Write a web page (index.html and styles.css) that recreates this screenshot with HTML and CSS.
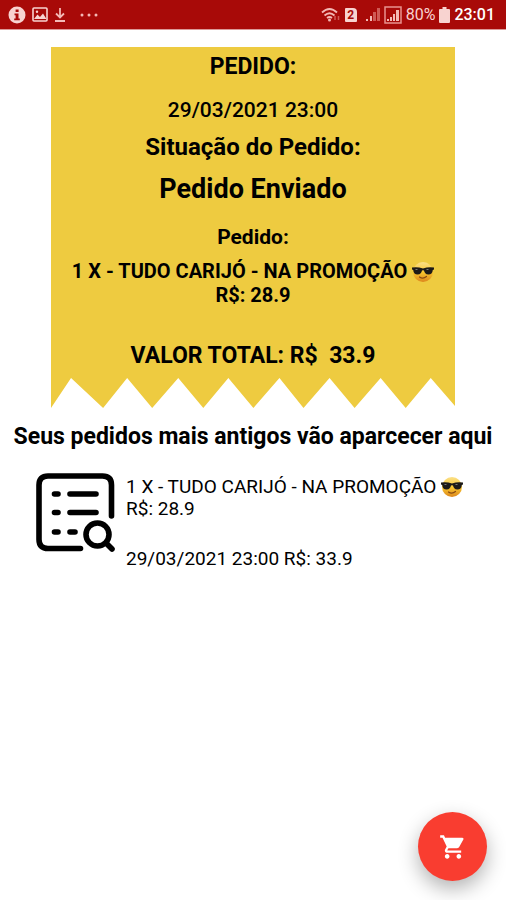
FILE: index.html
```html
<!DOCTYPE html>
<html lang="pt-BR">
<head>
  <meta charset="UTF-8">
  <meta name="viewport" content="width=device-width, initial-scale=1.0">
  <title>Pedidos</title>
  <link rel="stylesheet" href="styles.css">
</head>
<body>
  <!-- Sunglasses face, used in the ticket and in the history -->
  <svg class="sprite" aria-hidden="true">
    <defs>
      <linearGradient id="face" x1="0" y1="0" x2="0" y2="1">
        <stop offset="0" stop-color="#fbe08a"/>
        <stop offset="0.5" stop-color="#f9c72f"/>
        <stop offset="1" stop-color="#dc861c"/>
      </linearGradient>
    </defs>
    <symbol id="cool" viewBox="0 0 22 22">
      <circle cx="11" cy="11" r="10" fill="url(#face)"/>
      <path d="M0 6.5Q5.500 5.500 11 7.500Q16.500 5.500 22 6.500V8.500L20.800 9C20.500 12 19 13.500 16.500 13.500C13.500 13.500 12.500 11.500 12 9.500Q11 8.800 10 9.500C9.500 11.500 8.500 13.500 5.500 13.500C3 13.500 1.500 12 1.200 9L0 8.500Z" fill="#1c1a18"/>
      <path d="M3.500 8.500h2M14.500 8.500h2" stroke="#777" stroke-width="1"/>
      <path d="M7.500 16Q11 18.500 14.500 15.500" fill="none" stroke="#8a4b12" stroke-width="1.200" stroke-linecap="round"/>
    </symbol>
  </svg>

  <header class="status-bar">
    <div class="status-left">
      <svg width="18" height="18" viewBox="0 0 18 18">
        <circle cx="9" cy="9" r="8.500" fill="#f8d3d0"/>
        <path d="M7.600 3.500h3v2.600h-3zM6.500 7.500h4v5h1.300v1.700H6.200v-1.700h1.400V9.200H6.500z" fill="#a80a08"/>
      </svg>
      <svg width="16" height="16" viewBox="0 0 16 16">
        <rect x="1" y="1" width="14" height="13" rx="1" fill="none" stroke="#f8d3d0" stroke-width="1.600"/>
        <path d="M2 12l3.500-4.500 2.500 2.500 3-3.500 3.500 5.500z" fill="#f8d3d0"/>
        <circle cx="5" cy="4.800" r="1.200" fill="#f8d3d0"/>
      </svg>
      <svg width="12" height="16" viewBox="0 0 12 16">
        <path d="M6 1v9M2 6.500l4 4 4-4M1 14h10" fill="none" stroke="#f3b9b5" stroke-width="1.800"/>
      </svg>
      <svg class="more" width="18" height="4" viewBox="0 0 18 4">
        <g fill="#f3b9b5"><circle cx="2" cy="2" r="1.500"/><circle cx="9" cy="2" r="1.500"/><circle cx="16" cy="2" r="1.500"/></g>
      </svg>
    </div>
    <div class="status-right">
      <svg width="20" height="16" viewBox="0 0 20 16">
        <path d="M1 5.500Q8.500-1.500 16 5.500M3.500 8.500Q8.500 4 13.500 8.500M6 11Q8.500 9 11 11" fill="none" stroke="#f3b9b5" stroke-width="1.800"/>
        <circle cx="8.500" cy="13" r="1.500" fill="#f3b9b5"/>
        <path d="M14 13V9M17.500 9v4" stroke="#cf5a55" stroke-width="1.500"/>
      </svg>
      <span class="sim">2</span>
      <svg class="signal" width="15" height="15" viewBox="0 0 15 15">
        <path d="M1 12h2v2H1zM5 9h2v5H5z" fill="#f3b9b5"/>
        <path d="M8 5h3v9H8zM12 1h3v13h-3z" fill="#cf5a55"/>
      </svg>
      <svg width="18" height="18" viewBox="0 0 18 18">
        <rect x="1" y="1" width="16" height="16" fill="none" stroke="#e8938e" stroke-width="1.500"/>
        <path d="M3 13h2v2H3zM6 11h2v4H6zM9 8h2v7H9zM12 4h3v11h-3z" fill="#f3b9b5"/>
      </svg>
      <span class="battery-level">80%</span>
      <svg width="11" height="16" viewBox="0 0 11 16">
        <path d="M3.500 0h4v2H10q1 0 1 1v12q0 1-1 1H1q-1 0-1-1V3q0-1 1-1h2.500z" fill="#f8d3d0"/>
      </svg>
      <span class="clock">23:01</span>
    </div>
  </header>

  <main>
    <section class="ticket">
      <div class="ticket-body">
        <h1 class="ticket-title">PEDIDO:</h1>
        <p class="ticket-date">29/03/2021 23:00</p>
        <p class="ticket-label">Situação do Pedido:</p>
        <p class="ticket-status">Pedido Enviado</p>
        <p class="ticket-subtitle">Pedido:</p>
        <p class="ticket-items">1 X - TUDO CARIJÓ - NA PROMOÇÃO <svg class="emoji" role="img" aria-label="😎"><use href="#cool"/></svg><br>R$: 28.9</p>
        <p class="ticket-total">VALOR TOTAL: R$&nbsp; 33.9</p>
      </div>
      <svg class="ticket-edge" viewBox="0 0 404 31" preserveAspectRatio="none" aria-hidden="true">
        <path d="M0 0H404V30L379 1L354 31L329 1L303 31L278 1L252 31L228 1L202 31L177 1L152 31L127 1L101 31L76 1L52 31L20 1L0 31Z"/>
      </svg>
    </section>

    <h2 class="history-title">Seus pedidos mais antigos vão aparcecer aqui</h2>

    <article class="order">
      <svg class="order-icon" viewBox="0 0 80 80" fill="none" stroke="#000" stroke-linecap="round" aria-hidden="true">
        <path d="M44.500 75.500H12Q3 75.500 3 66.500V12Q3 3 12 3H66.500Q75.500 3 75.500 12V43" stroke-width="5.600"/>
        <path d="M18.500 21h3.500M34 21h26M18.500 39.500h3.500M34 39.500h26M18.500 59h3.500M34 59h5" stroke-width="5.600"/>
        <circle cx="61.500" cy="61.500" r="11.500" stroke-width="5.600"/>
        <path d="M70 70l6 6" stroke-width="5.600"/>
      </svg>
      <div class="order-info">
        <p>1 X - TUDO CARIJÓ - NA PROMOÇÃO <svg class="emoji" role="img" aria-label="😎"><use href="#cool"/></svg><br>R$: 28.9</p>
        <p>29/03/2021 23:00 R$: 33.9</p>
      </div>
    </article>
  </main>

  <button class="cart-button" type="button" aria-label="Carrinho">
    <svg width="28" height="28" viewBox="0 0 24 24" fill="#fff">
      <path d="M7 18c-1.100 0-1.990.9-1.990 2S5.900 22 7 22s2-.9 2-2-.9-2-2-2zM1 2v2h2l3.600 7.590-1.350 2.450c-.16.280-.25.610-.25.960 0 1.100.9 2 2 2h12v-2H7.420c-.14 0-.25-.11-.25-.25l.03-.12.9-1.630h7.450c.75 0 1.410-.41 1.750-1.030l3.580-6.490A1 1 0 0 0 20 4H5.210l-.94-2H1zm16 16c-1.100 0-1.990.9-1.990 2s.89 2 1.990 2 2-.9 2-2-.9-2-2-2z"/>
    </svg>
  </button>
</body>
</html>
```
FILE: styles.css
```css
body {
  margin: 0;
  font-family: Roboto, "Liberation Sans", sans-serif;
  background: #fff;
  color: #000;
}
h1, h2, p {
  margin: 0;
}
.sprite {
  position: absolute;
  width: 0;
  height: 0;
}

/* Phone status bar */
.status-bar {
  display: flex;
  justify-content: space-between;
  align-items: center;
  height: 29px;
  padding: 0 11px 0 8px;
  border-bottom: 1px solid #dc9a98;
  background: #a80a08;
  color: #f8d3d0;
}
.status-left, .status-right {
  display: flex;
  align-items: center;
}
.status-left {
  gap: 6px;
}
.status-left .more {
  margin-left: 8px;
}
.status-right {
  gap: 4px;
}
.status-right .signal {
  margin-left: 4px;
}
.sim {
  width: 12px;
  border-radius: 1px 4px 1px 1px;
  background: #f8d3d0;
  color: #a80a08;
  font-size: 12px;
  font-weight: bold;
  line-height: 14px;
  text-align: center;
}
.battery-level, .clock {
  font-size: 16px;
  line-height: 20px;
}
.clock {
  color: #fff;
  font-weight: 500;
}

/* Current order */
.ticket {
  width: 80%;
  margin: 17px auto 0;
}
.ticket-body {
  padding: 6px 8px 7px;
  background: #eecb40;
  font-weight: bold;
  text-align: center;
}
.ticket-edge {
  display: block;
  width: 100%;
  height: 31px;
  fill: #eecb40;
}
.ticket-title {
  font-size: 23px;
  line-height: 28px;
}
.ticket-date {
  margin-top: 17px;
  font-size: 21px;
  font-weight: 500;
  line-height: 24px;
}
.ticket-label {
  margin-top: 11px;
  font-size: 24px;
  line-height: 28px;
}
.ticket-status {
  margin-top: 12px;
  font-size: 27px;
  line-height: 32px;
}
.ticket-subtitle {
  margin-top: 20px;
  font-size: 21px;
  line-height: 24px;
}
.ticket-items {
  margin-top: 10px;
  font-size: 20px;
  line-height: 24px;
}
.ticket-total {
  margin-top: 35px;
  font-size: 23px;
  line-height: 28px;
}
.emoji {
  width: 22px;
  height: 22px;
  vertical-align: -5px;
}

/* Older orders */
.history-title {
  margin-top: 15px;
  font-size: 23px;
  font-weight: bold;
  line-height: 28px;
  text-align: center;
}
.order {
  display: flex;
  gap: 10px;
  margin-top: 22px;
  padding: 0 36px;
}
.order-icon {
  flex: none;
  width: 80px;
  height: 80px;
}
.order-info {
  padding-top: 3px;
  font-size: 19px;
  line-height: 22px;
}
.order-info p + p {
  margin-top: 28px;
}

.cart-button {
  position: fixed;
  right: 19px;
  bottom: 19px;
  display: flex;
  justify-content: center;
  align-items: center;
  width: 69px;
  height: 69px;
  padding: 0;
  border: 0;
  border-radius: 50%;
  background: #f93d30;
  box-shadow: 0 8px 20px rgba(0, 0, 0, 0.3);
}
```
